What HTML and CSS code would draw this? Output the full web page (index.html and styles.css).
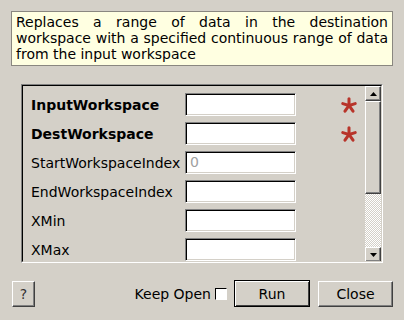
FILE: index.html
```html
<!DOCTYPE html>
<html>
<head>
<meta charset="utf-8">
<link rel="stylesheet" href="styles.css">
</head>
<body>
<div class="dialog">
  <div class="desc">Replaces a range of data in the destination workspace with a specified continuous range of data from the input workspace</div>
  <div class="panel">
    <div class="rows">
      <div class="row"><span class="label bold">InputWorkspace</span><span class="field"></span><span class="req"><svg width="16" height="16" viewBox="0 0 18 18"><g stroke="#b8342a" stroke-width="3.4" stroke-linecap="round"><line x1="9" y1="9.5" x2="9" y2="2"/><line x1="9" y1="9.5" x2="2" y2="7.5"/><line x1="9" y1="9.5" x2="16" y2="7.5"/><line x1="9" y1="9.5" x2="4.5" y2="16"/><line x1="9" y1="9.5" x2="13.5" y2="16"/></g></svg></span></div>
      <div class="row"><span class="label bold">DestWorkspace</span><span class="field"></span><span class="req"><svg width="16" height="16" viewBox="0 0 18 18"><g stroke="#b8342a" stroke-width="3.4" stroke-linecap="round"><line x1="9" y1="9.5" x2="9" y2="2"/><line x1="9" y1="9.5" x2="2" y2="7.5"/><line x1="9" y1="9.5" x2="16" y2="7.5"/><line x1="9" y1="9.5" x2="4.5" y2="16"/><line x1="9" y1="9.5" x2="13.5" y2="16"/></g></svg></span></div>
      <div class="row"><span class="label">StartWorkspaceIndex</span><span class="field"><span class="ph">0</span></span><span class="req"></span></div>
      <div class="row"><span class="label">EndWorkspaceIndex</span><span class="field"></span><span class="req"></span></div>
      <div class="row"><span class="label">XMin</span><span class="field"></span><span class="req"></span></div>
      <div class="row"><span class="label">XMax</span><span class="field"></span><span class="req"></span></div>
    </div>
    <div class="scrollbar">
      <div class="sbtn"><svg width="7" height="4" viewBox="0 0 7 4"><polygon points="3.5,0 7,4 0,4" fill="#000"/></svg></div>
      <div class="thumb"></div>
      <div class="trough"></div>
      <div class="sbtn"><svg width="7" height="4" viewBox="0 0 7 4"><polygon points="0,0 7,0 3.5,4" fill="#000"/></svg></div>
    </div>
  </div>
  <div class="bottom">
    <button class="btn help">?</button>
    <div class="spacer"></div>
    <label class="keep">Keep Open <span class="check"></span></label>
    <button class="btn run">Run</button>
    <button class="btn close">Close</button>
  </div>
</div>
</body>
</html>
```

FILE: styles.css
```css
html, body {
  margin: 0;
  padding: 0;
  background: #d4d0c8;
  width: 404px;
  height: 320px;
  overflow: hidden;
}
body {
  font-family: "DejaVu Sans", sans-serif;
  font-size: 14px;
  color: #000;
}
.dialog {
  padding: 11px 11px 0 11px;
}
.desc {
  border: 1px solid #8a8780;
  background: #ffffe1;
  box-sizing: border-box;
  width: 382px;
  height: 55px;
  line-height: 16px;
  padding: 2px 4px 0 4px;
  text-align: justify;
}
.panel {
  margin: 18px 0 0 10px;
  width: 362px;
  height: 179px;
  box-sizing: border-box;
  border-top: 1px solid #808080;
  border-left: 1px solid #808080;
  border-right: 1px solid #fff;
  border-bottom: 1px solid #fff;
  display: flex;
  position: relative;
}
.panel::before {
  content: "";
  position: absolute;
  inset: 0;
  border-top: 1px solid #000;
  border-left: 1px solid #000;
  border-right: 1px solid #d4d0c8;
  border-bottom: 1px solid #d4d0c8;
  pointer-events: none;
}
.rows {
  flex: 1;
  padding: 8px 0 0 9px;
  overflow: hidden;
  display: flex;
  flex-direction: column;
  gap: 6px;
}
.row {
  display: flex;
  align-items: center;
  height: 23px;
  flex-shrink: 0;
}
.label {
  width: 154px;
  white-space: nowrap;
}
.bold {
  font-weight: bold;
}
.field {
  width: 111px;
  height: 23px;
  box-sizing: border-box;
  background: #fff;
  border-top: 1px solid #808080;
  border-left: 1px solid #808080;
  border-right: 1px solid #fff;
  border-bottom: 1px solid #fff;
  box-shadow: inset 1px 1px 0 #000, inset -1px -1px 0 #d4d0c8;
  padding: 2px 0 0 4px;
  color: #a0a0a0;
}
.req {
  width: 16px;
  height: 16px;
  margin-left: 45px;
  display: flex;
}
.scrollbar {
  width: 16px;
  margin: 1px 1px 0 0;
  display: flex;
  flex-direction: column;
  height: 176px;
}
.sbtn, .thumb {
  box-sizing: border-box;
  background: #d4d0c8;
  border-top: 1px solid #fff;
  border-left: 1px solid #fff;
  border-right: 1px solid #404040;
  border-bottom: 1px solid #404040;
  box-shadow: inset -1px -1px 0 #808080;
}
.sbtn {
  height: 15px;
  display: flex;
  align-items: center;
  justify-content: center;
  flex-shrink: 0;
}
.thumb {
  height: 93px;
  flex-shrink: 0;
}
.trough {
  flex: 1;
  background: repeating-conic-gradient(#fff 0 25%, #d4d0c8 0 50%) 0 0 / 2px 2px;
}
.bottom {
  display: flex;
  align-items: center;
  margin-top: 17px;
  padding-left: 1px;
  height: 27px;
}
.spacer {
  flex: 1;
}
.btn {
  font-family: "DejaVu Sans", sans-serif;
  font-size: 14px;
  color: #000;
  background: #d4d0c8;
  box-sizing: border-box;
  border-top: 1px solid #fff;
  border-left: 1px solid #fff;
  border-right: 1px solid #404040;
  border-bottom: 1px solid #404040;
  box-shadow: inset -1px -1px 0 #808080;
  padding: 0;
  margin: 0;
  height: 26px;
}
.help {
  width: 23px;
  color: #333;
}
.keep {
  display: flex;
  align-items: center;
  gap: 4px;
  margin-right: 7px;
}
.check {
  width: 12px;
  height: 12px;
  box-sizing: border-box;
  background: #fff;
  border-top: 1px solid #000;
  border-left: 1px solid #000;
  border-right: 1px solid #fff;
  border-bottom: 1px solid #fff;
  display: inline-block;
}
.run {
  width: 76px;
  height: 27px;
  border: 1px solid #000;
  box-shadow: inset 1px 1px 0 #fff, inset -1px -1px 0 #404040;
  margin-right: 8px;
}
.close {
  width: 75px;
}
```
